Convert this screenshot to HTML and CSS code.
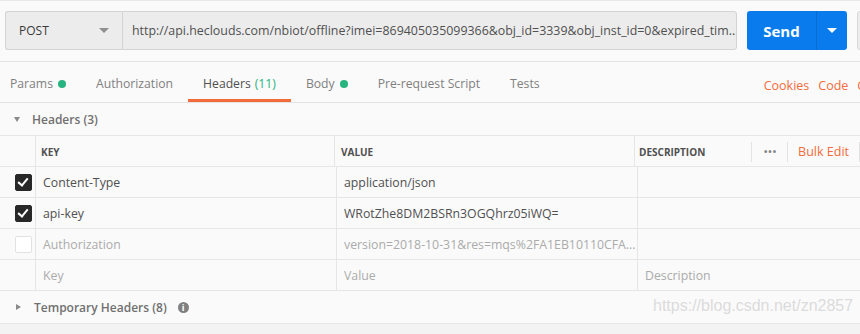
FILE: index.html
```html
<!DOCTYPE html>
<html lang="en">
<head>
    <meta charset="UTF-8">
    <title>POST request - headers</title>
    <link rel="stylesheet" href="styles.css">
</head>
<body>
    <div class="bovenbalk">
        <div class="methode">
            <span>POST</span>
            <span class="pijl-grijs"></span>
        </div>
        <div class="url">http://api.heclouds.com/nbiot/offline?imei=869405035099366&amp;obj_id=3339&amp;obj_inst_id=0&amp;expired_tim...</div>
        <div class="send">
            <div class="send-tekst">Send</div>
            <div class="send-pijl"><span class="pijl-wit"></span></div>
        </div>
        <div class="save"></div>
    </div>

    <div class="tabs">
        <div class="tab eerste">Params <span class="stip"></span></div>
        <div class="tab">Authorization</div>
        <div class="tab actief">Headers <span class="groen">(11)</span></div>
        <div class="tab">Body <span class="stip"></span></div>
        <div class="tab">Pre-request Script</div>
        <div class="tab">Tests</div>
        <div class="tabs-rechts">
            <span>Cookies</span>
            <span>Code</span>
            <span>Comments</span>
        </div>
    </div>

    <div class="sectie">
        <span class="driehoek-onder"></span>
        <span>Headers (3)</span>
    </div>

    <div class="tabel">
        <div class="rij kop">
            <div class="cel vak"></div>
            <div class="cel sleutel">KEY</div>
            <div class="cel waarde">VALUE</div>
            <div class="cel omschrijving">
                <span>DESCRIPTION</span>
                <div class="kop-acties">
                    <span class="scheiding"></span>
                    <span class="puntjes">&bull;&bull;&bull;</span>
                    <span class="scheiding"></span>
                    <span class="bulk">Bulk Edit</span>
                    <span class="scheiding"></span>
                </div>
            </div>
        </div>
        <div class="rij">
            <div class="cel vak"><span class="checkbox aan"></span></div>
            <div class="cel sleutel">Content-Type</div>
            <div class="cel waarde">application/json</div>
            <div class="cel omschrijving"></div>
        </div>
        <div class="rij">
            <div class="cel vak"><span class="checkbox aan"></span></div>
            <div class="cel sleutel">api-key</div>
            <div class="cel waarde">WRotZhe8DM2BSRn3OGQhrz05iWQ=</div>
            <div class="cel omschrijving"></div>
        </div>
        <div class="rij uit">
            <div class="cel vak"><span class="checkbox"></span></div>
            <div class="cel sleutel">Authorization</div>
            <div class="cel waarde">version=2018-10-31&amp;res=mqs%2FA1EB10110CFA...</div>
            <div class="cel omschrijving"></div>
        </div>
        <div class="rij leeg">
            <div class="cel vak"></div>
            <div class="cel sleutel">Key</div>
            <div class="cel waarde">Value</div>
            <div class="cel omschrijving">Description</div>
        </div>
    </div>

    <div class="sectie tijdelijk">
        <span class="driehoek-rechts"></span>
        <span>Temporary Headers (8)</span>
        <span class="info">i</span>
    </div>

    <div class="onderkant"></div>

    <div class="watermerk">https://blog.csdn.net/zn2857</div>
</body>
</html>
```

FILE: styles.css
```css
body {
    margin: 0;
    width: 860px;
    height: 334px;
    overflow: hidden;
    position: relative;
    background: #fafafa;
    font-family: "Open Sans", "Noto Sans", sans-serif;
    font-size: 12.3px;
    color: #505050;
}

/* bovenbalk met methode, url en send */
.bovenbalk {
    display: flex;
    align-items: stretch;
    height: 39px;
    padding: 10px 0 11px 5px;
    border-top: 1px solid #e8e8e8;
    border-bottom: 1px solid #e3e3e3;
}

.methode {
    flex-shrink: 0;
    width: 103px;
    padding: 0 0 0 13px;
    display: flex;
    align-items: center;
    justify-content: space-between;
    background: #ececec;
    border: 1px solid #d3d3d3;
    border-right: none;
    border-radius: 3px 0 0 3px;
    font-size: 12px;
    color: #3a3a3a;
}

.pijl-grijs {
    width: 0;
    height: 0;
    margin-right: 13px;
    border-left: 5px solid transparent;
    border-right: 5px solid transparent;
    border-top: 5px solid #8f8f8f;
}

.url {
    flex-shrink: 0;
    width: 604px;
    padding-left: 9px;
    display: flex;
    align-items: center;
    background: #ececec;
    border: 1px solid #d3d3d3;
    border-radius: 0 3px 3px 0;
    white-space: nowrap;
    overflow: hidden;
    font-size: 12.4px;
    color: #505050;
}

.send {
    flex-shrink: 0;
    display: flex;
    width: 100px;
    margin-left: 10px;
    background: #097bed;
    border-radius: 3px;
    color: #fff;
}

.send-tekst {
    width: 69px;
    display: flex;
    align-items: center;
    justify-content: center;
    font-size: 15px;
    font-weight: 700;
    border-right: 1px solid #0b6ccf;
}

.send-pijl {
    flex: 1;
    display: flex;
    align-items: center;
    justify-content: center;
}

.pijl-wit {
    width: 0;
    height: 0;
    border-left: 5px solid transparent;
    border-right: 5px solid transparent;
    border-top: 5px solid #fff;
}

.save {
    flex-shrink: 0;
    width: 80px;
    margin-left: 10px;
    background: #ececec;
    border: 1px solid #d8d8d8;
    border-radius: 3px;
}

/* tabs */
.tabs {
    display: flex;
    align-items: stretch;
    height: 40px;
    border-bottom: 1px solid #e3e3e3;
    white-space: nowrap;
}

.tab {
    display: flex;
    align-items: center;
    padding: 6px 15px 0;
    font-size: 12.2px;
    color: #808080;
    border-bottom: 3px solid transparent;
}

.tab.eerste {
    padding-left: 10px;
}

.tab.actief {
    color: #505050;
    border-bottom-color: #f26b3a;
}

.groen {
    color: #26b47f;
    margin-left: 4px;
}

.stip {
    display: inline-block;
    width: 8px;
    height: 8px;
    margin-left: 5px;
    border-radius: 50%;
    background: #26b47f;
}

.tabs-rechts {
    flex-shrink: 0;
    margin-left: auto;
    margin-right: -61px;
    display: flex;
    align-items: center;
    gap: 9px;
    padding-top: 6px;
    font-size: 12.5px;
    color: #f26b3a;
}

/* headers sectie */
.sectie {
    display: flex;
    align-items: center;
    height: 32px;
    padding-left: 14px;
    font-size: 12px;
    font-weight: 600;
    color: #707070;
}

.driehoek-onder {
    width: 0;
    height: 0;
    margin-right: 12px;
    border-left: 3.5px solid transparent;
    border-right: 3.5px solid transparent;
    border-top: 5px solid #8a8a8a;
}

.driehoek-rechts {
    width: 0;
    height: 0;
    margin: 0 13px 0 2px;
    border-top: 3.5px solid transparent;
    border-bottom: 3.5px solid transparent;
    border-left: 5px solid #8a8a8a;
}

.info {
    width: 11px;
    height: 11px;
    margin-left: 11px;
    border-radius: 50%;
    background: #808080;
    color: #fff;
    font-size: 9px;
    font-weight: 700;
    line-height: 11px;
    text-align: center;
}

/* tabel */
.tabel {
    border-top: 1px solid #e6e6e6;
}

.rij {
    display: flex;
    height: 30px;
    border-bottom: 1px solid #e6e6e6;
}

.cel {
    flex-shrink: 0;
    display: flex;
    align-items: center;
    padding-left: 7px;
    border-right: 1px solid #e6e6e6;
    white-space: nowrap;
    overflow: hidden;
    color: #505050;
}

.cel.vak {
    width: 35px;
    padding-left: 0;
}

.cel.sleutel,
.cel.waarde {
    width: 293px;
}

.cel.omschrijving {
    flex: 1;
    border-right: none;
    padding-left: 7px;
}

.kop .cel {
    font-size: 10px;
    font-weight: 700;
    color: #505050;
    padding-top: 1px;
}

.kop .cel.sleutel {
    padding-left: 5px;
}

.kop .cel.waarde {
    padding-left: 6px;
}

.kop .cel.omschrijving {
    padding-left: 4px;
}

.kop-acties {
    margin-left: auto;
    display: flex;
    align-items: center;
    height: 100%;
}

.scheiding {
    width: 1px;
    height: 20px;
    background: #e3e3e3;
}

.puntjes {
    padding: 0 10px 0 12px;
    font-size: 9px;
    letter-spacing: 1px;
    color: #808080;
}

.bulk {
    padding: 0 10px 0 10px;
    font-size: 12.5px;
    font-weight: 400;
    color: #f26b3a;
}

.checkbox {
    width: 15px;
    height: 15px;
    margin-left: 15px;
    border-radius: 2px;
    border: 1px solid #e2e2e2;
    background: #fff;
    position: relative;
}

.checkbox.aan {
    background: #282828;
    border-color: #282828;
}

.checkbox.aan::after {
    content: "";
    position: absolute;
    left: 4px;
    top: 1px;
    width: 4px;
    height: 8px;
    border-right: 2.5px solid #fff;
    border-bottom: 2.5px solid #fff;
    transform: rotate(40deg);
}

.uit .cel,
.leeg .cel {
    color: #ababab;
}

.tijdelijk {
    height: 32px;
    border-bottom: 1px solid #e6e6e6;
}

.onderkant {
    height: 20px;
    background: #f3f3f3;
}

/* watermerk van de blog */
.watermerk {
    position: absolute;
    left: 653px;
    top: 297px;
    font-family: "Liberation Sans", Arial, sans-serif;
    font-size: 16px;
    color: rgba(205, 205, 205, 0.7);
}
```
